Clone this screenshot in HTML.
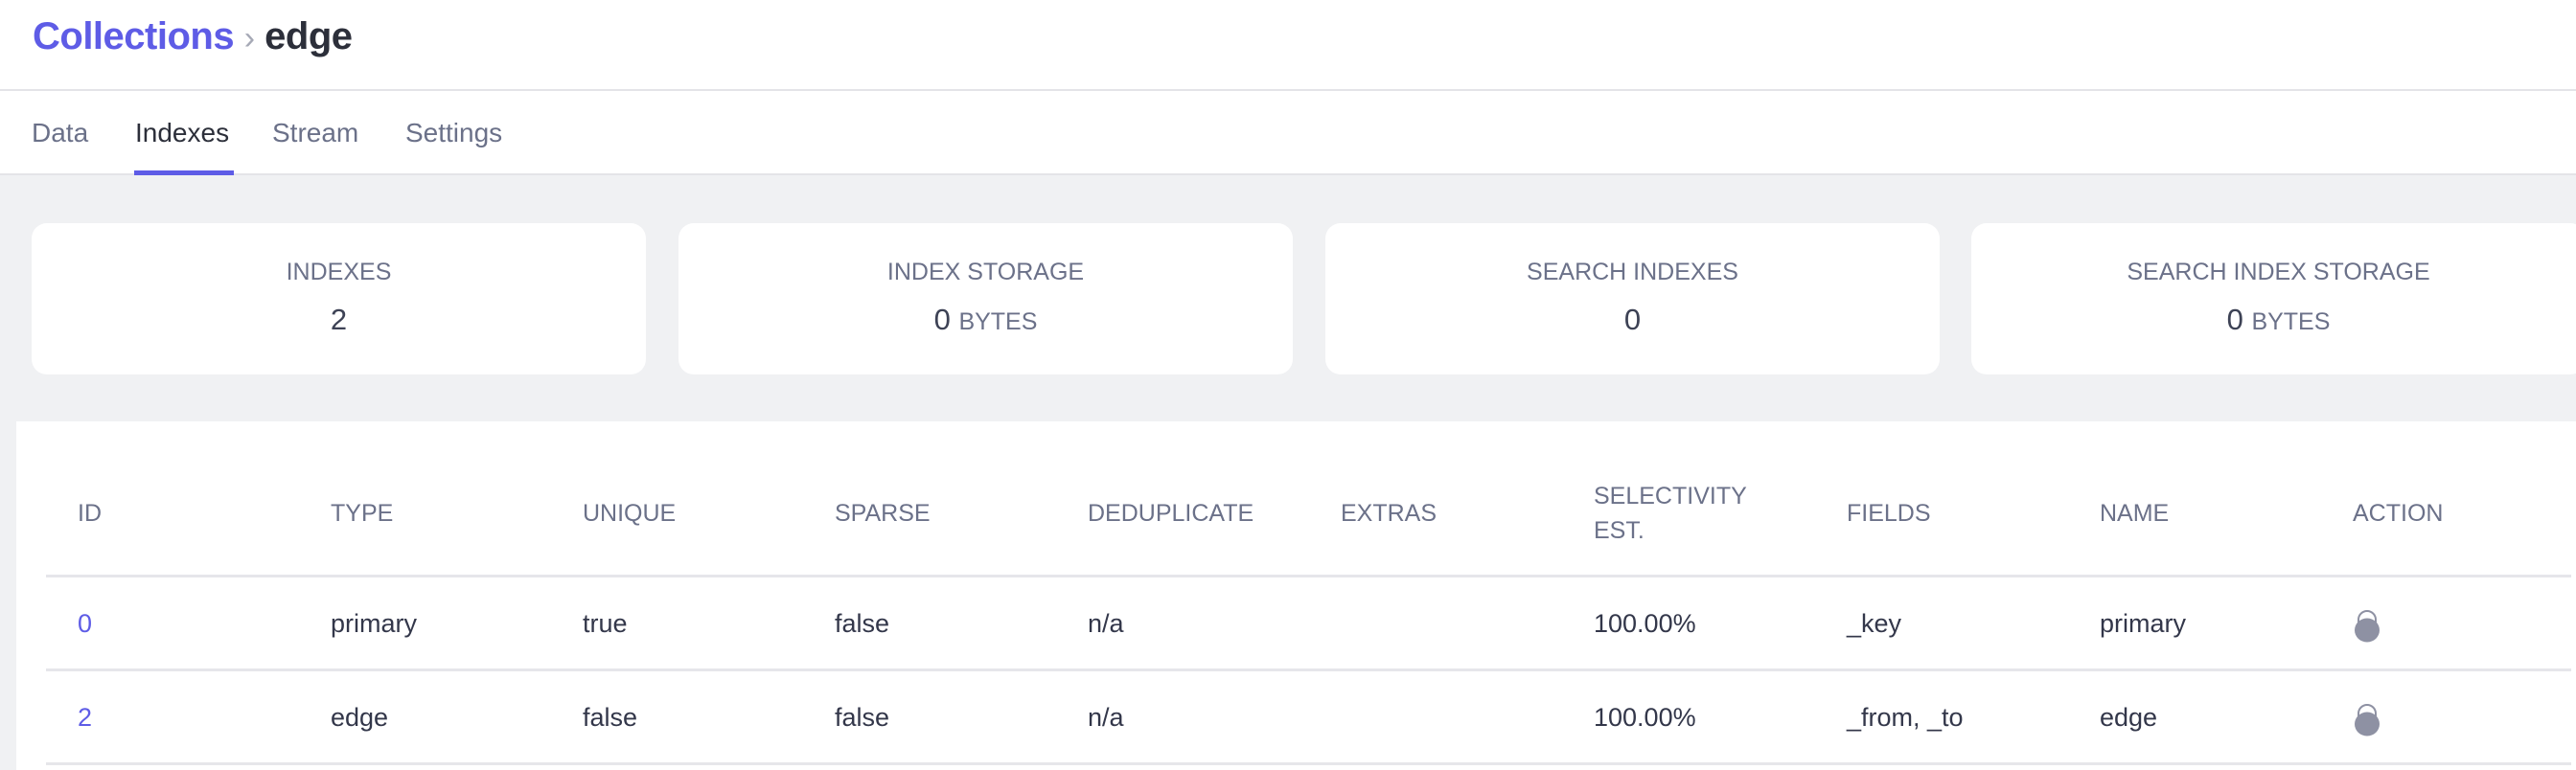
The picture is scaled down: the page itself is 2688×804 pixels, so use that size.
<!DOCTYPE html>
<html><head><meta charset="utf-8"><style>
*{margin:0;padding:0;box-sizing:border-box}
body{width:2688px;height:804px;overflow:hidden;background:#fff;font-family:"Liberation Sans",sans-serif;position:relative}
.a{position:absolute;white-space:nowrap}
.title{left:34px;top:12px;font-size:40px;line-height:52px;font-weight:bold;letter-spacing:-0.5px}
.hl{left:0;width:2688px;height:2px;background:#e4e4e8}
.tab{top:119px;font-size:28px;line-height:40px;color:#6b7189}
.gray{left:0;top:183px;width:2688px;height:621px;background:#f0f1f3}
.card{top:233px;height:158px;width:641px;background:#fff;border-radius:16px;text-align:center}
.card .l{position:absolute;left:0;right:0;top:37px;font-size:25px;color:#6b7189}
.card .v{position:absolute;left:0;right:0;top:83px;font-size:31px;color:#3d4255}
.card .v small{font-size:25px;color:#6b7189}
.panel{left:17px;top:440px;width:2671px;height:364px;background:#fff}
.th{font-size:25px;color:#6b7189;line-height:36px}
.td{font-size:27px;color:#33374a;line-height:36px}
.rl{left:48px;width:2635px;height:3px;background:#e6e6ea}
</style></head><body>
<div class="a title"><span style="color:#5e5ce6">Collections</span> <span style="color:#a6a9b6;font-weight:normal;font-size:34px">›</span> <span style="color:#2c2f3a">edge</span></div>
<div class="a hl" style="top:93px"></div>
<div class="a tab" style="left:33px">Data</div>
<div class="a tab" style="left:141px;color:#2c2f3a">Indexes</div>
<div class="a tab" style="left:284px">Stream</div>
<div class="a tab" style="left:423px">Settings</div>
<div class="a gray"></div>
<div class="a hl" style="top:181px"></div>
<div class="a" style="left:140px;top:178px;width:104px;height:5px;background:#5e5ce6"></div>
<div class="a card" style="left:33px"><div class="l">INDEXES</div><div class="v">2</div></div>
<div class="a card" style="left:708px"><div class="l">INDEX STORAGE</div><div class="v">0 <small>BYTES</small></div></div>
<div class="a card" style="left:1383px"><div class="l">SEARCH INDEXES</div><div class="v">0</div></div>
<div class="a card" style="left:2057px"><div class="l">SEARCH INDEX STORAGE</div><div class="v">0 <small>BYTES</small></div></div>
<div class="a panel"></div>
<div class="a th" style="left:81px;top:518px">ID</div>
<div class="a th" style="left:345px;top:518px">TYPE</div>
<div class="a th" style="left:608px;top:518px">UNIQUE</div>
<div class="a th" style="left:871px;top:518px">SPARSE</div>
<div class="a th" style="left:1135px;top:518px">DEDUPLICATE</div>
<div class="a th" style="left:1399px;top:518px">EXTRAS</div>
<div class="a th" style="left:1663px;top:500px">SELECTIVITY<br>EST.</div>
<div class="a th" style="left:1927px;top:518px">FIELDS</div>
<div class="a th" style="left:2191px;top:518px">NAME</div>
<div class="a th" style="left:2455px;top:518px">ACTION</div>
<div class="a rl" style="top:600px"></div>
<div class="a td" style="left:81px;top:633px;color:#5e5ce6">0</div>
<div class="a td" style="left:345px;top:633px">primary</div>
<div class="a td" style="left:608px;top:633px">true</div>
<div class="a td" style="left:871px;top:633px">false</div>
<div class="a td" style="left:1135px;top:633px">n/a</div>
<div class="a td" style="left:1663px;top:633px">100.00%</div>
<div class="a td" style="left:1927px;top:633px">_key</div>
<div class="a td" style="left:2191px;top:633px">primary</div>
<svg class="a" style="left:2456px;top:637px" width="28" height="34" viewBox="0 0 28 34"><path d="M5 16V10a9 9 0 0 1 18 0v6" fill="none" stroke="#8e91a3" stroke-width="2"/><ellipse cx="14" cy="21" rx="13" ry="12.5" fill="#8e91a3"/></svg>
<div class="a rl" style="top:698px"></div>
<div class="a td" style="left:81px;top:731px;color:#5e5ce6">2</div>
<div class="a td" style="left:345px;top:731px">edge</div>
<div class="a td" style="left:608px;top:731px">false</div>
<div class="a td" style="left:871px;top:731px">false</div>
<div class="a td" style="left:1135px;top:731px">n/a</div>
<div class="a td" style="left:1663px;top:731px">100.00%</div>
<div class="a td" style="left:1927px;top:731px">_from, _to</div>
<div class="a td" style="left:2191px;top:731px">edge</div>
<svg class="a" style="left:2456px;top:735px" width="28" height="34" viewBox="0 0 28 34"><path d="M5 16V10a9 9 0 0 1 18 0v6" fill="none" stroke="#8e91a3" stroke-width="2"/><ellipse cx="14" cy="21" rx="13" ry="12.5" fill="#8e91a3"/></svg>
<div class="a rl" style="top:796px"></div>
</body></html>
